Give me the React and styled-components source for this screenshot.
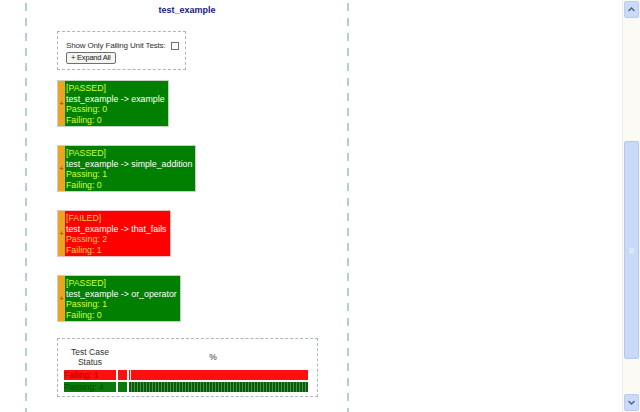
import React from 'react';
import styled, { createGlobalStyle } from 'styled-components';

const GlobalStyle = createGlobalStyle`
  html, body {
    margin: 0;
    padding: 0;
    background: #ffffff;
    overflow: hidden;
  }
  body {
    font-family: "Liberation Sans", Arial, sans-serif;
  }
`;

const tests = [
  { status: 'PASSED', name: 'example', passing: 0, failing: 0 },
  { status: 'PASSED', name: 'simple_addition', passing: 1, failing: 0 },
  { status: 'FAILED', name: 'that_fails', passing: 2, failing: 1 },
  { status: 'PASSED', name: 'or_operator', passing: 1, failing: 0 },
];

const Page = styled.div`
  display: flex;
  width: 640px;
  height: 412px;
`;

const Main = styled.main`
  flex: 1;
  padding-left: 25px;
`;

const Panel = styled.div`
  width: 320px;
  height: 412px;
  padding: 0 2px;
  background:
    linear-gradient(#b2d0d2 55%, transparent 0) left 0 top 3px / 2px 15px repeat-y,
    linear-gradient(#b2d0d2 55%, transparent 0) right 0 top 3px / 2px 15px repeat-y;
`;

const Title = styled.h1`
  margin: 0;
  padding-top: 5px;
  height: 31px;
  box-sizing: border-box;
  text-align: center;
  font-size: 9px;
  font-weight: bold;
  color: #202080;
`;

const Content = styled.div`
  padding-left: 30px;
  display: flex;
  flex-direction: column;
  align-items: flex-start;
`;

const Options = styled.div`
  width: 129px;
  height: 39px;
  box-sizing: border-box;
  border: 1px dashed #a8b8bc;
  padding: 8px 0 0 8px;
  font-size: 8px;
  color: #303030;
  letter-spacing: -0.15px;
  white-space: nowrap;
`;

const OptionRow = styled.label`
  display: flex;
  align-items: center;
  height: 11px;
`;

const Check = styled.span`
  display: inline-block;
  width: 6px;
  height: 6px;
  margin-left: 5px;
  border: 1px solid #707070;
  background: #fafafa;
`;

const ExpandButton = styled.button`
  margin-top: 1px;
  height: 12px;
  padding: 0 4px;
  font-family: "Liberation Sans", Arial, sans-serif;
  font-size: 7.5px;
  color: #202020;
  letter-spacing: -0.2px;
  background: #f4f4f0;
  border: 1px solid #707070;
  border-radius: 2px;
  line-height: 10px;
`;

const TestBox = styled.div`
  display: flex;
  margin-top: ${({ $first }) => ($first ? '10px' : '18px')};
  height: 47px;
  box-sizing: border-box;
  border: 1px solid ${({ $failed }) => ($failed ? '#f0c0c0' : '#c0d4c0')};
`;

const Toggle = styled.div`
  width: 7px;
  background: #eca424;
  display: flex;
  align-items: center;
  justify-content: center;
  font-size: 7px;
  color: #7a3a00;
`;

const TestBody = styled.div`
  background: ${({ $failed }) => ($failed ? '#ff0000' : '#007f00')};
  padding: 2px 3px 0 1px;
  font-size: 8.8px;
  line-height: 10.5px;
  white-space: nowrap;
`;

const Line = styled.div`
  color: ${({ $light, $failed }) =>
    $light ? '#ffffff' : $failed ? '#ffcc55' : '#d4ff3a'};
`;

const Chart = styled.div`
  margin-top: 16px;
  width: 261px;
  height: 59px;
  box-sizing: border-box;
  border: 1px dashed #a8b8bc;
  padding: 8px 7px 0 6px;
`;

const ChartGrid = styled.div`
  display: grid;
  grid-template-columns: 52px 9px 179px;
  column-gap: 2px;
  row-gap: 2px;
  font-size: 8.5px;
  color: #303030;
`;

const HeadCell = styled.div`
  text-align: center;
  line-height: 10px;
  grid-column: ${({ $span }) => $span || 'auto'};
  align-self: center;
  padding-bottom: 1px;
`;

const Cell = styled.div`
  height: 10px;
  line-height: 10px;
  font-size: 8.5px;
  background: ${({ $failed }) => ($failed ? '#ff1010' : '#0a7a0a')};
  color: ${({ $failed }) => ($failed ? '#b00000' : '#005000')};
  white-space: nowrap;
  overflow: hidden;
`;

const Bar = styled.div`
  height: 10px;
  background: ${({ $failed }) =>
    $failed
      ? 'linear-gradient(90deg, #ff1010 1px, #ffd0d0 1px, #ffd0d0 2px, #ff1010 2px)'
      : 'repeating-linear-gradient(90deg, #0d5a0d 0 2px, #3f9a3f 2px 3px)'};
`;

const Scrollbar = styled.div`
  width: 17px;
  height: 412px;
  background: #fbfaf4;
  border-left: 1px solid #f0efe8;
  display: flex;
  flex-direction: column;
`;

const Arrow = styled.div`
  height: 15px;
  margin: 1px;
  background: #c9dafa;
  border: 1px solid #b8ccf0;
  border-radius: 2px;
  display: flex;
  align-items: center;
  justify-content: center;
`;

const Track = styled.div`
  flex: 1;
  padding: 122px 1px 34px;
  display: flex;
`;

const Thumb = styled.div`
  flex: 1;
  background: #c8daf8;
  border: 1px solid #b4c8ec;
  border-radius: 2px;
  display: flex;
  align-items: center;
  justify-content: center;
`;

const Grip = styled.span`
  width: 5px;
  height: 5px;
  background: repeating-linear-gradient(#e8f0fe 0 1px, transparent 1px 2px);
`;

const Chevron = ({ up }) => (
  <svg width="7" height="5" viewBox="0 0 7 5">
    <path
      d={up ? 'M0.5 4 L3.5 1 L6.5 4' : 'M0.5 1 L3.5 4 L6.5 1'}
      fill="none"
      stroke="#4d6185"
      strokeWidth="1.3"
    />
  </svg>
);

const App = () => {
  const total = tests.length;
  return (
    <>
      <GlobalStyle />
      <Page>
        <Main>
          <Panel>
            <Title>test_example</Title>
            <Content>
              <Options>
                <OptionRow>
                  Show Only Failing Unit Tests:
                  <Check />
                </OptionRow>
                <ExpandButton>+ Expand All</ExpandButton>
              </Options>
              {tests.map((t, i) => {
                const failed = t.status === 'FAILED';
                return (
                  <TestBox key={t.name} $first={i === 0} $failed={failed}>
                    <Toggle>+</Toggle>
                    <TestBody $failed={failed}>
                      <Line $failed={failed}>[{t.status}]</Line>
                      <Line $light>test_example -&gt; {t.name}</Line>
                      <Line $failed={failed}>Passing: {t.passing}</Line>
                      <Line $failed={failed}>Failing: {t.failing}</Line>
                    </TestBody>
                  </TestBox>
                );
              })}
              <Chart>
                <ChartGrid>
                  <HeadCell>
                    Test Case
                    <br />
                    Status
                  </HeadCell>
                  <HeadCell $span="2 / 4">%</HeadCell>
                  <Cell $failed>Failing: 1</Cell>
                  <Cell $failed />
                  <Bar $failed />
                  <Cell>Passing: {total}</Cell>
                  <Cell />
                  <Bar />
                </ChartGrid>
              </Chart>
            </Content>
          </Panel>
        </Main>
        <Scrollbar>
          <Arrow>
            <Chevron up />
          </Arrow>
          <Track>
            <Thumb>
              <Grip />
            </Thumb>
          </Track>
          <Arrow>
            <Chevron />
          </Arrow>
        </Scrollbar>
      </Page>
    </>
  );
};

export default App;
